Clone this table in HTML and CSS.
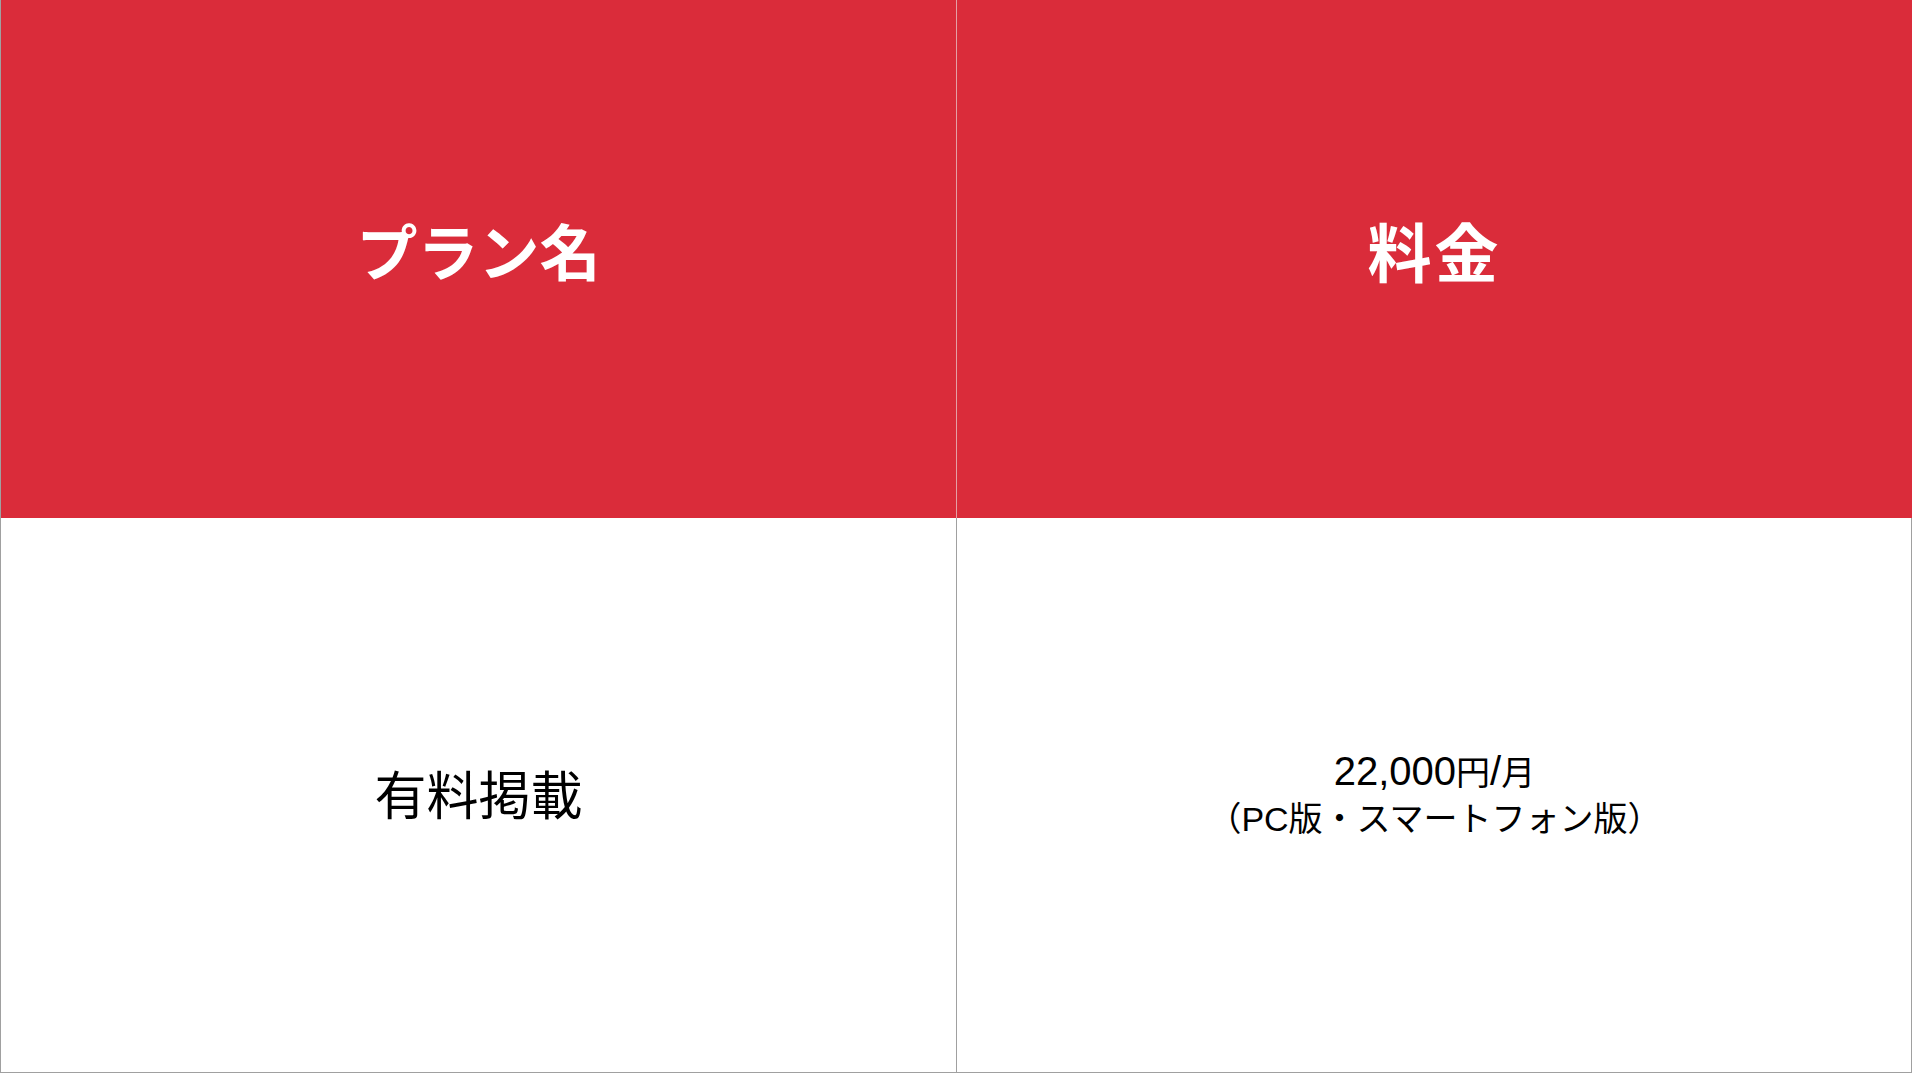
FILE: index.html
```html
<!DOCTYPE html>
<html lang="ja">
<head>
<meta charset="utf-8">
<title>料金プラン</title>
<link rel="stylesheet" href="styles.css">
</head>
<body>
<div class="table">
  <div class="cell head">プラン名</div>
  <div class="cell head price-head">料金</div>
  <div class="cell body name">有料掲載</div>
  <div class="cell body price">
    <div class="price-text"><span class="num">22,000</span>円<span class="num">/</span>月<br>（PC版・スマートフォン版）</div>
  </div>
</div>
</body>
</html>
```

FILE: styles.css
```css
html, body {
  margin: 0;
  padding: 0;
  background: #ffffff;
}
body {
  font-family: "Liberation Sans", "Noto Sans CJK JP", sans-serif;
}
.table {
  width: 1912px;
  height: 1073px;
  display: grid;
  grid-template-columns: 956px 956px;
  grid-template-rows: 518px 555px;
  border-right: 1px solid #a0a0a0;
  border-bottom: 1px solid #a0a0a0;
  box-sizing: border-box;
}
.cell {
  display: flex;
  align-items: center;
  justify-content: center;
  text-align: center;
  border-left: 1px solid #a0a0a0;
  box-sizing: border-box;
}
.head {
  background: #da2c3a;
  color: #ffffff;
  font-family: "Noto Sans CJK JP", sans-serif;
  font-weight: 700;
  font-size: 61px;
  padding-bottom: 20px;
}
.head + .head {
  border-left-color: #e4a0a5;
}
.price-head {
  font-size: 64px;
  letter-spacing: 3px;
}
.body {
  color: #000000;
}
.name {
  font-family: "Noto Sans CJK JP", sans-serif;
  font-size: 52px;
  padding-bottom: 6px;
}
.price {
  font-size: 34px;
  line-height: 46px;
  padding-bottom: 0;
}
.num {
  font-size: 40px;
  line-height: 40px;
}
```
